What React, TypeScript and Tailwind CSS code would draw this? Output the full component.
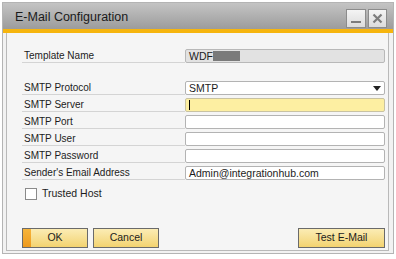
import React from "react";

const font = { fontFamily: '"Liberation Sans", Arial, sans-serif' };

const Row = ({ label, children }: { label: string; children: React.ReactNode }) => (
    <div className="flex h-[13px]">
        <div className="w-[163px] h-[13px] border-b border-[#d4d4d4] text-[10px] leading-[12px] text-[#1c1c1c] pl-[2px] whitespace-nowrap">
            {label}
        </div>
        {children}
    </div>
);

const Field = ({ children, bg = "bg-white border-[#b3b3b3]" }: { children?: React.ReactNode; bg?: string }) => (
    <div className={`w-[200px] h-[14px] -mt-px border rounded-[2px] text-[10.5px] leading-[12px] text-[#1c1c1c] pl-[3px] relative flex items-center ${bg}`}>
        {children}
    </div>
);

const Btn = ({ label, w, ok }: { label: string; w: string; ok?: boolean }) => (
    <div className={`${w} h-[20px] border border-[#6a6a6a] bg-gradient-to-b from-[#fbecb4] to-[#f3d36f] flex items-center justify-center text-[10.5px] text-[#1c1c1c] relative`}>
        {ok && <div className="absolute left-0 top-0 bottom-0 w-[8px] bg-gradient-to-b from-[#f6b43a] to-[#ee9a1c]" />}
        <span className="relative">{label}</span>
    </div>
);

export default function App() {
    return (
        <div className="w-[396px] h-[259px] bg-white pt-[2px] pl-[2px]" style={font}>
            <div className="w-[392px] h-[252px] border border-[#b4b4b4] bg-[#f2f2f2] flex flex-col">
                {/* title bar */}
                <div className="h-[26px] bg-gradient-to-b from-[#c4c4c4] to-[#9c9c9c] flex items-center pl-[12px] pr-[6px]">
                    <span className="text-[12.5px] text-[#1a1a1a] mt-[3px]">E-Mail Configuration</span>
                    <div className="ml-auto flex gap-[2px] mt-[4px]">
                        <div className="w-[20px] h-[19px] border border-[#8c8c8c] bg-gradient-to-b from-[#f4f4f4] to-[#dcdcdc] flex items-end justify-center pb-[4px]">
                            <div className="w-[10px] h-[2px] bg-[#7c7c7c]" />
                        </div>
                        <div className="w-[19px] h-[19px] border border-[#8c8c8c] bg-gradient-to-b from-[#f4f4f4] to-[#dcdcdc] flex items-center justify-center">
                            <svg width="11" height="11" viewBox="0 0 11 11">
                                <path d="M1.5 1.5 L9.5 9.5 M9.5 1.5 L1.5 9.5" stroke="#7c7c7c" strokeWidth="2.2" />
                            </svg>
                        </div>
                    </div>
                </div>
                <div className="h-[4px] bg-[#f6b50e]" />
                {/* body */}
                <div className="ml-[3px] mr-[4px] mb-[2px] flex-1 border-x border-b border-[#b9b9b9] bg-[#f5f5f5] pl-[15px] pt-[17px]">
                    <Row label="Template Name">
                        <Field bg="bg-[#e2e2e2] border-[#b8b8b8]">
                            <span>WDF</span>
                            <span className="inline-block w-[27px] h-[10px] bg-[#7a7a7a]" />
                        </Field>
                    </Row>
                    <div className="h-[19px]" />
                    <div className="flex flex-col gap-[4px]">
                        <Row label="SMTP Protocol">
                            <Field>
                                SMTP
                                <svg className="absolute right-[3px] top-[4px]" width="8" height="5" viewBox="0 0 8 5">
                                    <path d="M0 0 H8 L4 5 Z" fill="#222" />
                                </svg>
                            </Field>
                        </Row>
                        <Row label="SMTP Server">
                            <Field bg="bg-[#fdefa2] border-[#c8c2a2]">
                                <div className="absolute left-[3px] top-[1px] w-px h-[10px] bg-black" />
                            </Field>
                        </Row>
                        <Row label="SMTP Port">
                            <Field />
                        </Row>
                        <Row label="SMTP User">
                            <Field />
                        </Row>
                        <Row label="SMTP Password">
                            <Field />
                        </Row>
                        <Row label="Sender's Email Address">
                            <Field>Admin@integrationhub.com</Field>
                        </Row>
                    </div>
                    <div className="flex items-center mt-[6px] ml-[3px]">
                        <div className="w-[12px] h-[12px] border border-[#8a8a8a] bg-white" />
                        <span className="ml-[5px] text-[10.5px] text-[#1c1c1c]">Trusted Host</span>
                    </div>
                    <div className="flex mt-[26px] pr-[3px]">
                        <Btn label="OK" w="w-[66px]" ok />
                        <div className="w-[5px]" />
                        <Btn label="Cancel" w="w-[66px]" />
                        <div className="flex-1" />
                        <Btn label="Test E-Mail" w="w-[87px]" />
                    </div>
                </div>
            </div>
        </div>
    );
}
